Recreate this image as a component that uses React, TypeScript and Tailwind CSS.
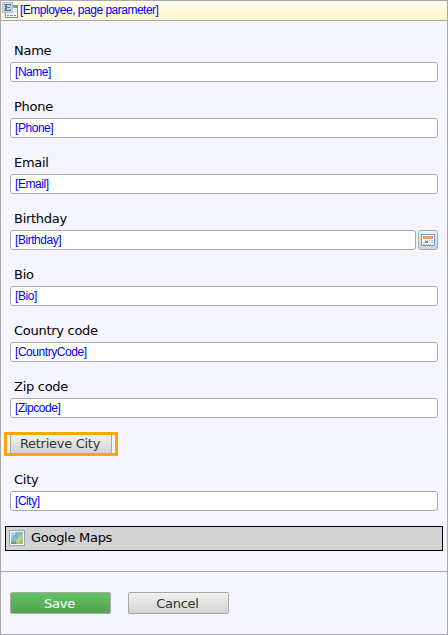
import React from "react";

const label = "font-['Verdana','DejaVu_Sans',sans-serif] tracking-[-0.28px]";
const binding = "font-['Liberation_Sans',Arial,sans-serif] text-[#0000ff] whitespace-nowrap";
const silver = "bg-linear-to-b from-[#f1f1f1] to-[#d3d3d3] border border-[#a8a8a8] text-[#333]";

function EntityIcon() {
  return (
    <svg className="mt-px shrink-0" width="16" height="16" viewBox="0 0 16 16" shapeRendering="crispEdges">
      <rect x="3.5" y="3.5" width="12" height="12" fill="#f2f7fc" stroke="#6d8fb8" />
      <path d="M4 4h11v2H4z" fill="#78a3d0" />
      <path d="M11 7h4v1h-4zM11 9h4v1h-4z" fill="#dce7f2" />
      <path d="M5 13h2v1H5zM8 13h3v1H8zM12 13h2v1h-2z" fill="#5b8ed0" />
      <rect x="0.5" y="0.5" width="10" height="10" fill="#c9d5e3" stroke="#b2c0d1" />
      <path d="M2 2h7v2H8V3H5v2h3v1H5v2h3V7h1v2H2V8h1V3H2z" fill="#5f7898" />
    </svg>
  );
}

function CalendarIcon() {
  return (
    <svg className="shrink-0" width="14" height="14" viewBox="0 0 14 14" shapeRendering="crispEdges">
      <rect x="0.5" y="1.5" width="13" height="11" fill="#fff" stroke="#6799d9" />
      <path d="M2 3h10v3H2z" fill="#f58a4b" />
      <path d="M3 4h8v1H3z" fill="#ffad73" />
      <path d="M4 7h1v1H4zM6 7h1v1H6zM8 7h1v1H8zM10 7h2v1h-2zM2 9h2v1H2zM8 9h1v1H8zM10 9h2v1h-2zM2 11h2v1H2zM5 11h1v1H5zM7 11h1v1H7zM9 11h1v1H9z" fill="#b4c1cd" />
      <path d="M4 8h3v2H4z" fill="#5baf58" />
    </svg>
  );
}

function MapIcon() {
  return (
    <svg className="shrink-0" width="16" height="16" viewBox="0 0 16 16">
      <rect x="0.5" y="0.5" width="15" height="15" fill="#fff" stroke="#8ba7af" />
      <path d="M2 2h12v12H2z" fill="#76b9df" />
      <path d="M2 2h6L2 8z" fill="#a8d6ef" />
      <path d="M2 12l3-2 3-1 2-4 4-2v11H2z" fill="#aab977" />
      <path d="M8 9l3-4 3-1v5l-3 2-2 3H6z" fill="#c5c98b" />
      <path d="M2 13l4-2 2 3H2z" fill="#5b9b8b" />
    </svg>
  );
}

interface FieldProps {
  name: string;
  value: string;
  calendar?: boolean;
}

function Field({ name, value, calendar }: FieldProps) {
  return (
    <div className="h-14">
      <div className={`${label} h-[21px] pl-1 text-[13px] leading-[20px] text-black`}>{name}</div>
      <div className="flex gap-[2px]">
        <div className={`${binding} h-5 flex-1 rounded-[3px] border border-[#a8a8a8] bg-white pl-1 text-[12px] leading-[18px] tracking-[-0.45px]`}>
          {value}
        </div>
        {calendar && (
          <button className={`${silver} flex h-5 w-5 items-center justify-center rounded-[3px]`}>
            <CalendarIcon />
          </button>
        )}
      </div>
    </div>
  );
}

export default function App() {
  return (
    <div className="flex h-[635px] w-[448px] flex-col overflow-hidden border border-[#a8a8a8] bg-[#f5f5ff]">
      <header className="flex h-5 shrink-0 border-b border-[#a8a8a8] bg-linear-to-b from-[#fffdf0] to-[#fff6c8] pl-px">
        <EntityIcon />
        <span className={`${binding} ml-[2px] text-[12px] leading-[18px] tracking-[-0.5px]`}>[Employee, page parameter]</span>
      </header>
      <main className="h-[551px] shrink-0 border-b border-[#a8a8a8] pt-5">
        <div className="pr-[9px] pl-[9px]">
          <Field name="Name" value="[Name]" />
          <Field name="Phone" value="[Phone]" />
          <Field name="Email" value="[Email]" />
          <Field name="Birthday" value="[Birthday]" calendar />
          <Field name="Bio" value="[Bio]" />
          <Field name="Country code" value="[CountryCode]" />
          <Field name="Zip code" value="[Zipcode]" />
        </div>
        <div className="-mt-px ml-[3px] flex h-6 w-[114px] border-3 border-[#ffa500] px-[3px]">
          <button className={`${label} h-full w-[102px] border-x border-[#a8a8a8] bg-linear-to-b from-[#f1f1f1] to-[#d3d3d3] pr-[2px] text-[13px] leading-[16px] text-[#333]`}>
            Retrieve City
          </button>
        </div>
        <div className="mt-[14px] px-[9px]">
          <Field name="City" value="[City]" />
        </div>
        <div className="mr-[4px] ml-[4px] flex h-[25px] items-start border border-black bg-[#d3d3d3] pt-[3px] pl-[3px]">
          <MapIcon />
          <span className={`${label} ml-[6px] text-[13px] leading-[15px] text-black`}>Google Maps</span>
        </div>
      </main>
      <footer className="flex gap-[17px] pt-5 pl-[9px]">
        <button className={`${label} h-[22px] w-[101px] rounded-[2px] border border-[#a8a8a8] bg-linear-to-b from-[#62c462] to-[#51a351] pr-[2px] text-[13px] leading-[19px] text-white`}>
          Save
        </button>
        <button className={`${label} ${silver} h-[22px] w-[101px] rounded-[2px] pr-[2px] text-[13px] leading-[19px]`}>
          Cancel
        </button>
      </footer>
    </div>
  );
}
